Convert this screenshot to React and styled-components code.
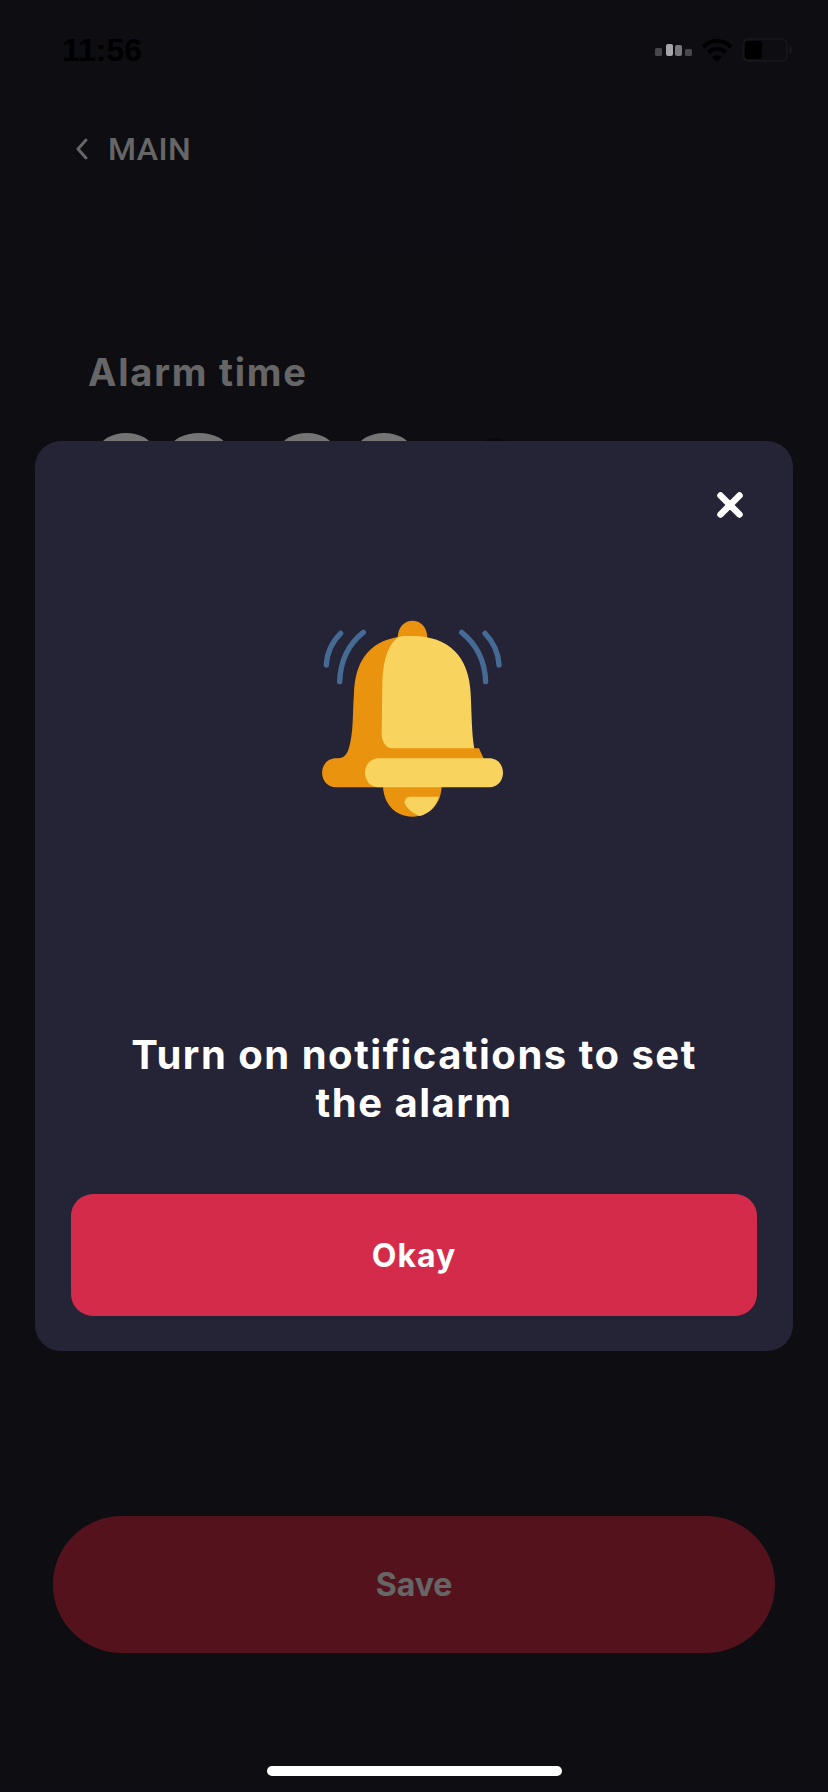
import React from 'react';
import styled, { createGlobalStyle } from 'styled-components';

const GlobalStyle = createGlobalStyle`
    html, body {
        margin: 0;
        padding: 0;
        background: #21212f;
    }
    * {
        box-sizing: border-box;
    }
`

const Page = styled.div`
    position: relative;
    width: 828px;
    height: 1792px;
    overflow: hidden;
    display: flex;
    flex-direction: column;
    background: #21212f;
    font-family: "Inter", "Liberation Sans", sans-serif;
    color: #fff;
`

const StatusBar = styled.div`
    display: flex;
    justify-content: space-between;
    align-items: center;
    height: 50px;
    margin-top: 25px;
    padding: 0 36px 0 62px;
`

const Time = styled.span`
    font-family: "Liberation Sans", sans-serif;
    font-size: 32px;
    font-weight: 700;
    color: #000;
`

const StatusIcons = styled.div`
    position: relative;
    z-index: 1;
    display: flex;
    align-items: center;
    gap: 9px;
`

const BackRow = styled.div`
    display: flex;
    align-items: center;
    gap: 19px;
    margin-top: 56px;
    padding-left: 75px;
    height: 36px;
    font-size: 32px;
    font-weight: 500;
    letter-spacing: 0.5px;
    font-family: "Roboto", sans-serif;
`

const Title = styled.h2`
    margin: 183px 0 0 88px;
    height: 44px;
    line-height: 44px;
    font-size: 38px;
    font-weight: 700;
    letter-spacing: 1.8px;
`

const Digits = styled.div`
    position: relative;
    z-index: 1;
    display: flex;
    align-items: flex-start;
    margin: 39px 0 0 100px;
`

const Digit = styled.span`
    width: ${(p) => p.$w}px;
    height: 30px;
    margin-right: ${(p) => p.$gap}px;
    border-radius: 50%;
    background: #747474;
`

const HiddenDigit = styled.span`
    width: 34px;
    height: 30px;
    margin-top: 5px;
    border-radius: 50%;
    background: #08080c;
`

const SaveButton = styled.div`
    display: flex;
    align-items: center;
    justify-content: center;
    width: 722px;
    height: 137px;
    margin: auto 0 139px 53px;
    border-radius: 69px / 68px;
    background: #d22e49;
    font-size: 32px;
    font-weight: 700;
`

const Overlay = styled.div`
    position: absolute;
    inset: 0;
    background: rgba(0, 0, 0, 0.6);
`

const Modal = styled.div`
    position: absolute;
    z-index: 2;
    top: 441px;
    left: 35px;
    width: 758px;
    height: 910px;
    display: flex;
    flex-direction: column;
    align-items: center;
    padding: 0 36px;
    border-radius: 26px;
    background: #252336;
`

const CloseButton = styled.button`
    position: absolute;
    top: 51px;
    right: 50px;
    width: 26px;
    height: 26px;
    padding: 0;
    border: 0;
    background: none;
    display: flex;
`

const Bell = styled.svg`
    flex: none;
    width: 230px;
    height: 240px;
    margin-top: 159px;
`

const Message = styled.p`
    width: 100%;
    margin: 191px 0 0;
    text-align: center;
    font-size: 40px;
    line-height: 48px;
    font-weight: 700;
    letter-spacing: 1.5px;
`

const OkayButton = styled.div`
    display: flex;
    align-items: center;
    justify-content: center;
    width: 100%;
    height: 122px;
    margin-top: 67px;
    border-radius: 22px;
    background: #d52b4b;
    font-size: 32px;
    font-weight: 700;
    letter-spacing: 1px;
`

const HomeBar = styled.div`
    position: absolute;
    z-index: 2;
    left: 267px;
    top: 1766px;
    width: 295px;
    height: 10px;
    border-radius: 5px;
    background: #fff;
`

const Chevron = () => (
    <svg width="14" height="22" viewBox="0 0 14 22" fill="none" stroke="#fff" strokeWidth="3" strokeLinecap="round" strokeLinejoin="round">
        <path d="M11 2 3 11l8 9" />
    </svg>
)

const Signal = () => (
    <svg width="37" height="12" viewBox="0 0 37 12">
        <rect x="0" y="4" width="7" height="8" rx="1.500" fill="#48484c" />
        <rect x="11" y="0" width="7" height="12" rx="2" fill="#a6a6a8" />
        <rect x="20" y="1" width="7" height="11" rx="2" fill="#78787b" />
        <rect x="30" y="5" width="7" height="7" rx="1.500" fill="#48484c" />
    </svg>
)

const Wifi = () => (
    <svg width="32" height="24" viewBox="0 0 32 24" fill="none" stroke="#000" strokeWidth="4">
        <path d="M2 9c8-8 20-8 28 0" />
        <path d="M7.500 14.500c5-5 12-5 17 0" />
        <path d="M16 24l-5-5c3-2.500 7-2.500 10 0z" fill="#000" stroke="none" />
    </svg>
)

const Battery = () => (
    <svg width="50" height="24" viewBox="0 0 50 24">
        <rect x="1" y="1" width="44" height="22" rx="6" fill="none" stroke="#15151c" strokeWidth="2" />
        <rect x="47" y="8" width="3" height="8" rx="1.500" fill="#15151c" />
        <rect x="3" y="3" width="17" height="18" rx="3" fill="#000" />
    </svg>
)

const BellIcon = () => (
    <Bell viewBox="0 0 690 720">
        <g fill="none" stroke="#456a94" strokeWidth="16" strokeLinecap="round">
            <path d="M82 195C84 155 100 125 125 100" />
            <path d="M122 245C124 185 145 135 193 97" />
            <path d="M488 97C535 135 558 185 560 245" />
            <path d="M558 100C582 125 598 155 600 195" />
        </g>
        <path d="M296 115C296 45 385 45 385 115Z" fill="#e9930f" />
        <path d="M252 555H428C428 610 392 650 340 650C288 650 252 610 252 555Z" fill="#e9930f" />
        <path d="M332 590H420C410 620 390 640 362 648C340 640 322 625 316 607C318 597 324 590 332 590Z" fill="#f8d45f" />
        <path d="M300 110C205 125 168 190 165 280C160 340 165 400 148 450C140 470 130 475 112 475C55 475 55 562 112 562H300Z" fill="#e9930f" />
        <path d="M340 108H300C270 125 252 180 250 250L248 400C248 430 262 445 290 445H540L555 478H200V500H300Z" fill="#e9930f" />
        <path d="M340 108C450 108 510 170 515 280C518 340 518 400 526 447H290C262 447 248 430 248 400L250 250C252 180 268 130 300 110C312 108 326 108 340 108Z" fill="#f8d45f" />
        <path d="M526 445C530 462 542 472 560 478H240V445Z" fill="#e9930f" />
        <path d="M240 475H570C626 475 626 562 570 562H240C184 562 184 475 240 475Z" fill="#f8d45f" />
    </Bell>
)

const App = () => {
    return (
        <Page>
            <GlobalStyle />
            <StatusBar>
                <Time>11:56</Time>
                <StatusIcons>
                    <Signal />
                    <Wifi />
                    <Battery />
                </StatusIcons>
            </StatusBar>
            <BackRow>
                <Chevron />
                <span>MAIN</span>
            </BackRow>
            <Title>Alarm time</Title>
            <Digits>
                <Digit $w={52} $gap={19} />
                <Digit $w={56} $gap={54} />
                <Digit $w={52} $gap={25} />
                <Digit $w={52} $gap={68} />
                <HiddenDigit />
            </Digits>
            <SaveButton>Save</SaveButton>
            <Overlay />
            <Modal>
                <CloseButton>
                    <svg width="26" height="26" viewBox="0 0 26 26" stroke="#fff" strokeWidth="6.500" strokeLinecap="round">
                        <path d="M3.500 3.500l19 19M22.500 3.500l-19 19" />
                    </svg>
                </CloseButton>
                <BellIcon />
                <Message>Turn on notifications to set<br />the alarm</Message>
                <OkayButton>Okay</OkayButton>
            </Modal>
            <HomeBar />
        </Page>
    );
}

export default App;
